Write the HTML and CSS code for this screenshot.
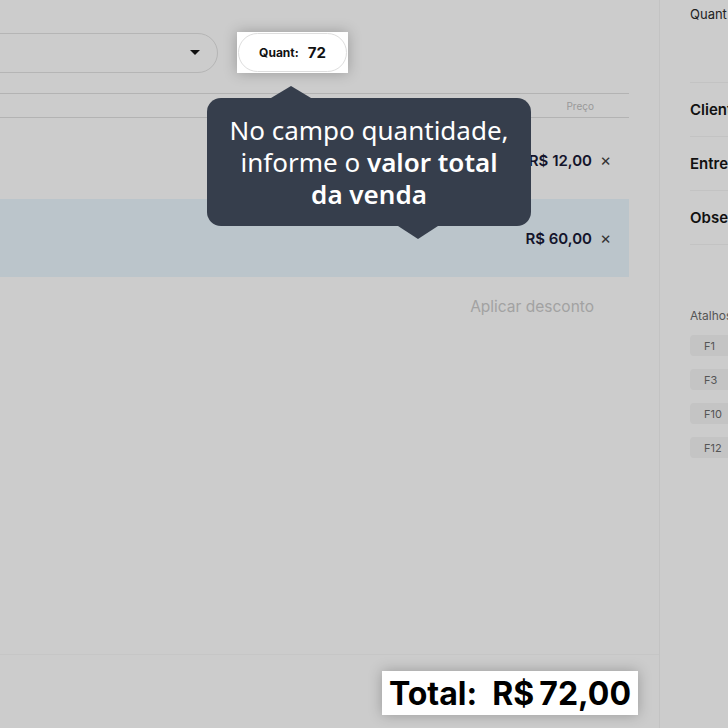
FILE: index.html
```html
<!DOCTYPE html>
<html>
<head>
    <title>Venda - Quantidade</title>
    <link rel="stylesheet" href="styles.css">
</head>
<body>
    <div class="app">
        <div class="main">
            <div class="toolbar">
                <div class="select-box">
                    <span class="caret"></span>
                </div>
                <div class="spot quant-spot">
                    <div class="quant-pill">
                        <span class="quant-label">Quant:</span>
                        <span class="quant-value">72</span>
                    </div>
                </div>
            </div>

            <div class="items">
                <div class="items-head">
                    <span>Preço</span>
                </div>
                <div class="item-row">
                    <span class="price">R$ 12,00</span>
                    <span class="remove">&times;</span>
                </div>
                <div class="item-row selected">
                    <span class="price">R$ 60,00</span>
                    <span class="remove">&times;</span>
                </div>
            </div>

            <div class="discount">
                <a href="#">Aplicar desconto</a>
            </div>

            <div class="footer">
                <div class="spot total-spot">Total:&nbsp; R$&#8239;72,00</div>
            </div>

            <!-- tutorial balloon -->
            <div class="tooltip">
                No campo quantidade,<br>
                informe o <b>valor total</b><br>
                <b>da venda</b>
            </div>
        </div>

        <div class="side">
            <div class="side-top">Quant</div>
            <div class="side-row">Cliente</div>
            <div class="side-row">Entrega</div>
            <div class="side-row">Observações</div>

            <div class="shortcuts">
                <div class="shortcuts-title">Atalhos</div>
                <div class="key">F1</div>
                <div class="key">F3</div>
                <div class="key">F10</div>
                <div class="key">F12</div>
            </div>
        </div>
    </div>
</body>
</html>
```

FILE: styles.css
```css
body {
    margin: 0;
    background-color: #cccccc;
    font-family: 'Inter', 'Liberation Sans', sans-serif;
    color: #111;
    overflow: hidden;
}

.app {
    display: flex;
    height: 728px;
}

/* Main column */
.main {
    position: relative;
    width: 659px;
    flex-shrink: 0;
    border-right: 1px solid #c3c3c3;
    display: flex;
    flex-direction: column;
}

.toolbar {
    display: flex;
    align-items: center;
    padding-top: 32px;
    height: 41px;
}

.select-box {
    margin-left: -40px;
    width: 258px;
    height: 40px;
    box-sizing: border-box;
    border: 1px solid #b5b5b5;
    border-radius: 20px;
    display: flex;
    align-items: center;
    justify-content: flex-end;
    padding-right: 17px;
}

.caret {
    width: 0;
    height: 0;
    border-left: 5px solid transparent;
    border-right: 5px solid transparent;
    border-top: 5px solid #111;
}

.spot {
    background-color: #ffffff;
    box-shadow: 0 0 14px rgba(0, 0, 0, 0.25);
}

.quant-spot {
    margin-left: 19px;
    padding: 1px;
}

.quant-pill {
    width: 107px;
    height: 37px;
    border: 1px solid #dedede;
    border-radius: 20px;
    display: flex;
    align-items: center;
    justify-content: center;
    gap: 9px;
}

.quant-label {
    font-size: 12px;
    font-weight: 700;
}

.quant-value {
    font-size: 15px;
    font-weight: 700;
}

/* Items table */
.items {
    margin-top: 20px;
    width: 629px;
}

.items-head {
    height: 23px;
    border-top: 1px solid #b3b3b3;
    border-bottom: 1px solid #b3b3b3;
    display: flex;
    align-items: center;
    justify-content: flex-end;
    padding-right: 35px;
    font-size: 10px;
    color: #999999;
}

.item-row {
    height: 81px;
    padding-top: 3px;
    box-sizing: border-box;
    display: flex;
    align-items: center;
    justify-content: flex-end;
    padding-right: 17px;
    gap: 8px;
}

.item-row.selected {
    background-color: #bbc5cb;
    height: 78px;
    padding-top: 0;
}

.price {
    font-size: 15px;
    font-weight: 600;
    color: #14142b;
}

.remove {
    font-size: 17px;
    color: #333;
    width: 12px;
}

.discount {
    width: 594px;
    display: flex;
    justify-content: flex-end;
    padding-top: 20px;
}

.discount a {
    font-size: 15.5px;
    color: #a2a2a2;
    text-decoration: none;
}

.footer {
    margin-top: auto;
    height: 73px;
    border-top: 1px solid #c6c6c6;
    display: flex;
    justify-content: flex-end;
    align-items: flex-start;
    padding-right: 21px;
}

.total-spot {
    margin-top: 16px;
    height: 44px;
    padding: 0 7px;
    display: flex;
    align-items: center;
    font-size: 32px;
    font-weight: 700;
    color: #000;
}

/* Balloon over the table */
.tooltip {
    position: absolute;
    left: 207px;
    top: 98px;
    width: 324px;
    height: 128px;
    box-sizing: border-box;
    padding-top: 16px;
    background-color: #363e4c;
    border-radius: 14px;
    color: #ffffff;
    font-family: 'Noto Sans', 'Open Sans', sans-serif;
    font-size: 26px;
    line-height: 32px;
    text-align: center;
}

.tooltip b {
    font-weight: 600;
}

.tooltip::before,
.tooltip::after {
    content: "";
    position: absolute;
    width: 0;
    height: 0;
    border-left: 20px solid transparent;
    border-right: 20px solid transparent;
}

.tooltip::before {
    left: 64px;
    top: -12px;
    border-bottom: 12px solid #363e4c;
}

.tooltip::after {
    left: 191px;
    bottom: -13px;
    border-top: 13px solid #363e4c;
}

/* Side panel */
.side {
    flex: 1;
    padding-left: 30px;
    white-space: nowrap;
    overflow: hidden;
}

.side-top {
    height: 83px;
    padding-top: 6px;
    box-sizing: border-box;
    border-bottom: 1px solid #c3c3c3;
    font-size: 13px;
    color: #222;
}

.side-row {
    height: 53px;
    border-bottom: 1px solid #c3c3c3;
    display: flex;
    align-items: center;
    font-size: 15px;
    font-weight: 600;
    color: #111;
}

.shortcuts {
    padding-top: 63px;
}

.shortcuts-title {
    font-size: 12px;
    color: #555;
    margin-bottom: 12px;
}

.key {
    width: 60px;
    height: 21px;
    margin-bottom: 13px;
    padding-left: 14px;
    box-sizing: border-box;
    background-color: #c4c4c4;
    border-radius: 4px;
    display: flex;
    align-items: center;
    font-size: 11px;
    color: #555;
}
```
